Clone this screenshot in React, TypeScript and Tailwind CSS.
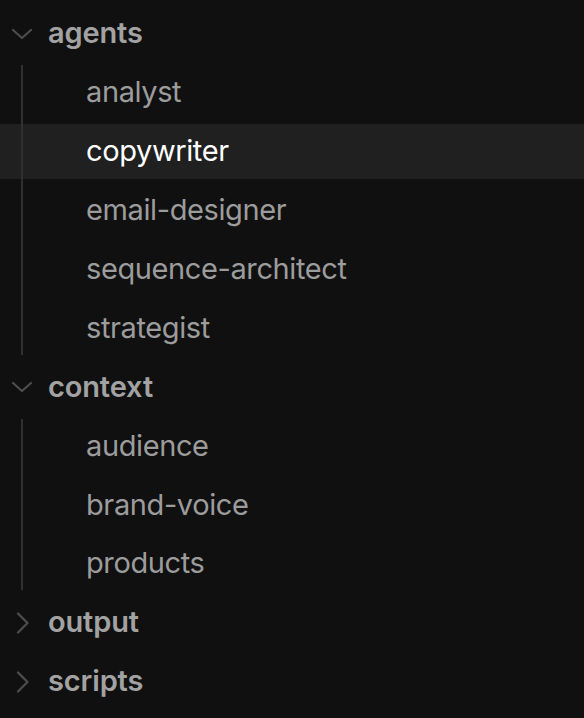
import React from 'react'

type Folder = {
    name: string
    open: boolean
    files: string[]
}

const tree: Folder[] = [
    { name: 'agents', open: true, files: ['analyst', 'copywriter', 'email-designer', 'sequence-architect', 'strategist'] },
    { name: 'context', open: true, files: ['audience', 'brand-voice', 'products'] },
    { name: 'output', open: false, files: [] },
    { name: 'scripts', open: false, files: [] },
]

const selected = 'copywriter'

function Chevron({ open }: { open: boolean }) {
    if (open) {
        return (
            <svg width="22" height="22" viewBox="0 0 22 22" fill="none" className="shrink-0">
                <path d="M2 7l9 8 9-8" stroke="#4d4d4d" strokeWidth="2.2" strokeLinecap="round" strokeLinejoin="round" />
            </svg>
        )
    }
    return (
        <svg width="22" height="22" viewBox="0 0 22 22" fill="none" className="shrink-0">
            <path d="M7 1.5l9.5 9.5L7 20.5" stroke="#4d4d4d" strokeWidth="2.2" strokeLinecap="round" strokeLinejoin="round" />
        </svg>
    )
}

export default function App() {
    return (
        <div className="w-[584px] h-[718px] bg-[#101010] overflow-hidden pt-[4.5px] font-['Inter',sans-serif] text-[29px]">
            {tree.map((folder) => (
                <div key={folder.name}>
                    {/* Folder row */}
                    <div className="h-[58.9px] flex items-center">
                        <div className="h-[55px] w-full flex items-center pl-[11px]">
                            <Chevron open={folder.open} />
                            <span className="ml-[15px] font-semibold text-[#a2a2a2] leading-none pb-[2px] tracking-[-0.005em]">
                                {folder.name}
                            </span>
                        </div>
                    </div>

                    {/* Files */}
                    {folder.open && (
                        <div className="relative">
                            <div className="absolute left-[21px] top-[2px] bottom-[3px] w-[2px] bg-[#303030]" />
                            {folder.files.map((file) => (
                                <div key={file} className="h-[58.9px] flex items-center">
                                    <div
                                        className={`h-[55px] w-full flex items-center pl-[86px] ${file === selected ? 'bg-[#202020] text-white' : 'text-[#9c9c9c]'}`}
                                    >
                                        <span className="leading-none pb-[2px] tracking-[-0.0135em]">{file}</span>
                                    </div>
                                </div>
                            ))}
                        </div>
                    )}
                </div>
            ))}
        </div>
    )
}
